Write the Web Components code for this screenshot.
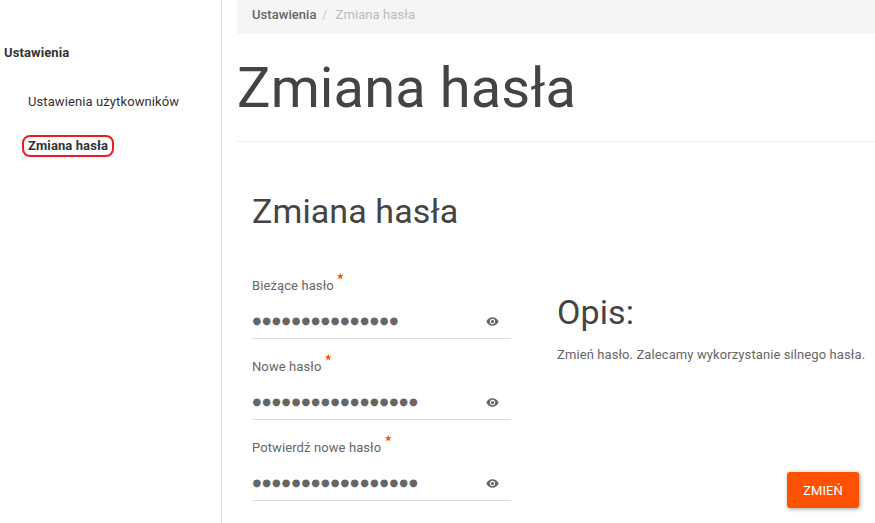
<!DOCTYPE html>
<html lang="pl">
<head>
<meta charset="utf-8">
<title>Zmiana hasła</title>
<style>
    body {
        margin: 0;
        height: 523px;
        overflow: hidden;
        background: #fff;
        color: #666;
        font: 13px/20px Roboto, sans-serif;
        letter-spacing: 0.1px;
    }
</style>
</head>
<body>
<settings-page>
    <side-menu slot="menu" heading="Ustawienia">
        <menu-item>Ustawienia użytkowników</menu-item>
        <menu-item active>Zmiana hasła</menu-item>
    </side-menu>
    <bread-crumb parent="Ustawienia">Zmiana hasła</bread-crumb>
    <page-title>Zmiana hasła</page-title>
    <password-form heading="Zmiana hasła">
        <password-field label="Bieżące hasło" length="15"></password-field>
        <password-field label="Nowe hasło" length="17"></password-field>
        <password-field label="Potwierdź nowe hasło" length="17"></password-field>
        <info-box slot="info" heading="Opis:">Zmień hasło. Zalecamy wykorzystanie silnego hasła.</info-box>
        <raised-button slot="action">ZMIEŃ</raised-button>
    </password-form>
</settings-page>

<script>
class SettingsPage extends HTMLElement {
    constructor() {
        super();
        this.attachShadow({ mode: 'open' });
        this.shadowRoot.innerHTML = `
            <style>
                :host { display: flex; height: 523px; }
                aside {
                    box-sizing: border-box;
                    flex: 0 0 222px;
                    border-right: 1px solid #ddd;
                }
                main { flex: 1; min-width: 0; padding-left: 15px; }
            </style>
            <aside><slot name="menu"></slot></aside>
            <main><slot></slot></main>
        `;
    }
}

class SideMenu extends HTMLElement {
    constructor() {
        super();
        this.attachShadow({ mode: 'open' });
    }

    connectedCallback() {
        this.shadowRoot.innerHTML = `
            <style>
                :host { display: block; padding: 43px 0 0 4px; color: #333; }
                .heading { font-weight: 700; }
                nav {
                    display: flex;
                    flex-direction: column;
                    align-items: flex-start;
                    gap: 22px;
                    padding: 28px 0 0 18px;
                }
            </style>
            <div class="heading">${this.getAttribute('heading')}</div>
            <nav><slot></slot></nav>
        `;
    }
}

class MenuItem extends HTMLElement {
    constructor() {
        super();
        this.attachShadow({ mode: 'open' });
        this.shadowRoot.innerHTML = `
            <style>
                :host {
                    display: block;
                    box-sizing: border-box;
                    height: 22px;
                    padding: 0 4px;
                    border: 2px solid transparent;
                    border-radius: 8px;
                    line-height: 18px;
                    white-space: nowrap;
                }
                :host([active]) { border-color: #ed1c24; font-weight: 700; }
            </style>
            <slot></slot>
        `;
    }
}

class BreadCrumb extends HTMLElement {
    constructor() {
        super();
        this.attachShadow({ mode: 'open' });
    }

    connectedCallback() {
        this.shadowRoot.innerHTML = `
            <style>
                :host {
                    display: flex;
                    box-sizing: border-box;
                    height: 34px;
                    padding: 5px 15px;
                    border-radius: 0 0 0 2px;
                    background: #f5f5f5;
                    color: #bbb;
                }
                .parent { color: #666; font-weight: 500; letter-spacing: 0.05px; }
                .divider { padding: 0 8px 0 5.5px; color: #ccc; }
            </style>
            <span class="parent">${this.getAttribute('parent')}</span>
            <span class="divider">/</span>
            <span><slot></slot></span>
        `;
    }
}

class PageTitle extends HTMLElement {
    constructor() {
        super();
        this.attachShadow({ mode: 'open' });
        this.shadowRoot.innerHTML = `
            <style>
                :host { display: block; border-bottom: 1px solid #eee; }
                h1 {
                    margin: 0;
                    padding: 23px 0 22px;
                    color: #444;
                    font-size: 56px;
                    font-weight: 400;
                    line-height: 62px;
                }
            </style>
            <h1><slot></slot></h1>
        `;
    }
}

class PasswordForm extends HTMLElement {
    constructor() {
        super();
        this.attachShadow({ mode: 'open' });
    }

    connectedCallback() {
        this.shadowRoot.innerHTML = `
            <style>
                :host { display: flex; gap: 46px; height: 381px; padding: 0 16px 0 15px; box-sizing: border-box; }
                .fields { flex: 0 0 259px; }
                h2 {
                    margin: 50px 0 36px;
                    color: #444;
                    font-size: 34px;
                    font-weight: 400;
                    line-height: 38px;
                }
                .side {
                    flex: 1;
                    min-width: 0;
                    display: flex;
                    flex-direction: column;
                    justify-content: space-between;
                    padding: 151px 0 15px;
                }
            </style>
            <div class="fields">
                <h2>${this.getAttribute('heading')}</h2>
                <slot></slot>
            </div>
            <div class="side">
                <slot name="info"></slot>
                <slot name="action"></slot>
            </div>
        `;
    }
}

class PasswordField extends HTMLElement {
    constructor() {
        super();
        this.attachShadow({ mode: 'open' });
    }

    connectedCallback() {
        const dots = '●'.repeat(Number(this.getAttribute('length')));
        this.shadowRoot.innerHTML = `
            <style>
                :host { display: block; height: 81px; }
                .label { display: flex; height: 29px; padding-top: 10px; box-sizing: border-box; }
                .star { display: block; width: 6.5px; height: 6.5px; margin: -3px 0 0 3.5px; fill: #ff5200; }
                .input {
                    display: flex;
                    align-items: center;
                    box-sizing: border-box;
                    height: 44px;
                    padding-top: 9px;
                    border-bottom: 1px solid #ddd;
                }
                .dots {
                    flex: 1;
                    padding-left: 0.5px;
                    font: 10px/20px "DejaVu Sans", sans-serif;
                    letter-spacing: 1.06px;
                }
                .eye { width: 13px; height: 13px; margin-right: 12px; fill: #666; }
            </style>
            <div class="label">
                <span>${this.getAttribute('label')}</span>
                <svg class="star" viewBox="0 0 24 24"><path d="M12 0l3.200 8.200 8.800.5-6.800 5.600L19.400 23 12 18.200 4.600 23l2.200-8.700L0 8.700l8.800-.5z"/></svg>
            </div>
            <div class="input">
                <span class="dots">${dots}</span>
                <svg class="eye" viewBox="0 0 24 24"><path d="M12 4C7 4 2.500 7.400.7 12c1.800 4.600 6.300 8 11.300 8s9.500-3.400 11.300-8C21.500 7.400 17 4 12 4zM12 17c-2.760 0-5-2.240-5-5s2.240-5 5-5 5 2.240 5 5-2.240 5-5 5zm0-8c-1.660 0-3 1.340-3 3s1.340 3 3 3 3-1.340 3-3-1.340-3-3-3z"/></svg>
            </div>
        `;
    }
}

class InfoBox extends HTMLElement {
    constructor() {
        super();
        this.attachShadow({ mode: 'open' });
    }

    connectedCallback() {
        this.shadowRoot.innerHTML = `
            <style>
                :host { display: block; white-space: nowrap; }
                h3 {
                    margin: 0 0 14px;
                    color: #444;
                    font-size: 34px;
                    font-weight: 400;
                    line-height: 38px;
                }
                p { margin: 0; }
            </style>
            <h3>${this.getAttribute('heading')}</h3>
            <p><slot></slot></p>
        `;
    }
}

class RaisedButton extends HTMLElement {
    constructor() {
        super();
        this.attachShadow({ mode: 'open' });
        this.shadowRoot.innerHTML = `
            <style>
                :host { display: flex; justify-content: flex-end; }
                button {
                    width: 72px;
                    height: 36px;
                    padding: 2px 0 0;
                    border: 0;
                    border-radius: 3px;
                    background: #ff5200;
                    box-shadow: 1px 1px 4px rgba(0, 0, 0, 0.4);
                    color: #fff;
                    font: inherit;
                    letter-spacing: 0.1px;
                }
            </style>
            <button type="button"><slot></slot></button>
        `;
    }
}

customElements.define('settings-page', SettingsPage);
customElements.define('side-menu', SideMenu);
customElements.define('menu-item', MenuItem);
customElements.define('bread-crumb', BreadCrumb);
customElements.define('page-title', PageTitle);
customElements.define('password-form', PasswordForm);
customElements.define('password-field', PasswordField);
customElements.define('info-box', InfoBox);
customElements.define('raised-button', RaisedButton);
</script>
</body>
</html>
